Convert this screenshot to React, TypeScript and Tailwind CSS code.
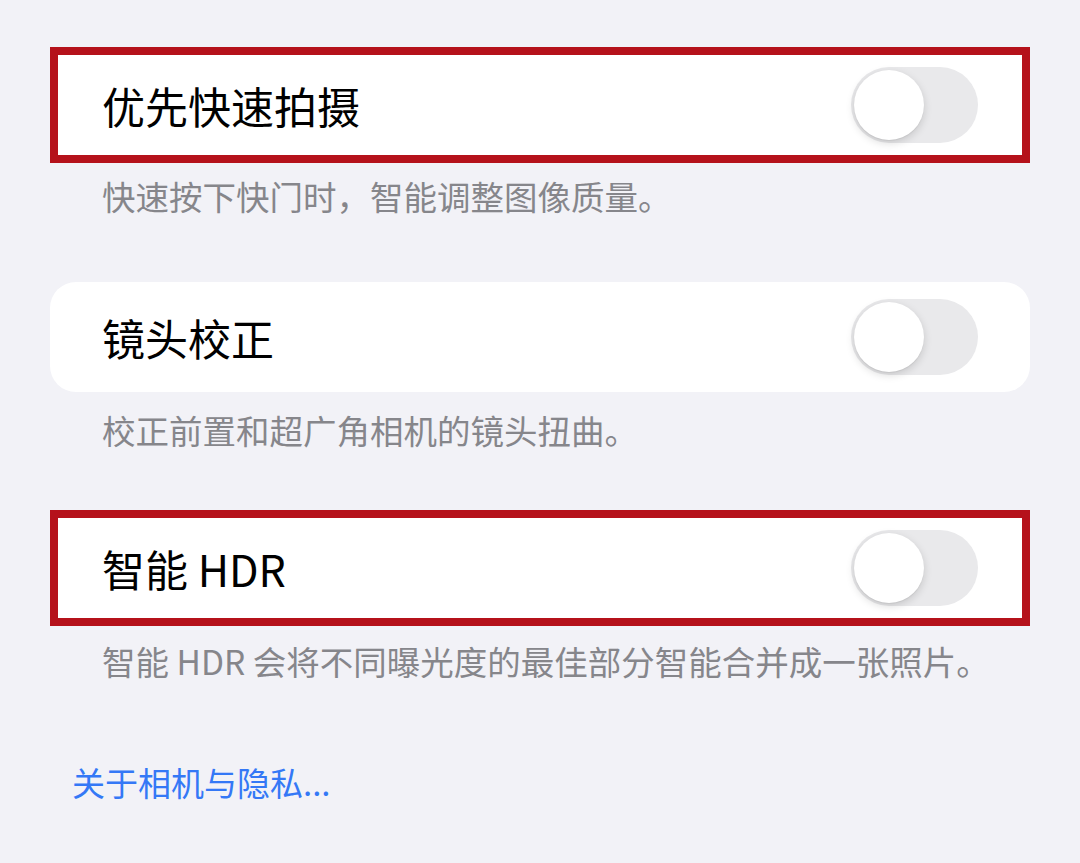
const font = { fontFamily: '"Noto Sans CJK SC", "Noto Sans", sans-serif' };

const Toggle = () => (
  <div className="w-[127px] h-[76px] rounded-full bg-[#e9e9eb] p-[3px] flex items-center">
    <div className="w-[70px] h-[70px] rounded-full bg-white shadow-[0_3px_8px_rgba(0,0,0,0.15),0_1px_1px_rgba(0,0,0,0.06)]" />
  </div>
);

const Row = ({ title, marked }: { title: string; marked?: boolean }) => (
  <div
    className={
      marked
        ? "h-[116px] bg-white border-[8px] border-[#b5121b] flex items-center justify-between pl-[44px] pr-[44px]"
        : "h-[110px] bg-white rounded-[26px] flex items-center justify-between pl-[52px] pr-[52px]"
    }
  >
    <span className="text-[43px] leading-none text-black">{title}</span>
    <Toggle />
  </div>
);

const Note = ({ text, className }: { text: string; className: string }) => (
  <div className={"h-[40px] flex items-center pl-[52px] text-[33.5px] text-[#86868b] " + className}>
    {text}
  </div>
);

export default function App() {
  return (
    <div className="w-[1080px] h-[863px] bg-[#f2f2f7] px-[50px] pt-[47px] overflow-hidden" style={font}>
      <Row title="优先快速拍摄" marked />
      <Note text="快速按下快门时，智能调整图像质量。" className="mt-[13px]" />

      <div className="mt-[66px]">
        <Row title="镜头校正" />
      </div>
      <Note text="校正前置和超广角相机的镜头扭曲。" className="mt-[18px]" />

      <div className="mt-[60px]">
        <Row title="智能 HDR" marked />
      </div>
      <Note text="智能 HDR 会将不同曝光度的最佳部分智能合并成一张照片。" className="mt-[15px]" />

      <div className="mt-[82px] h-[40px] flex items-center pl-[22px] text-[33px] text-[#3478f6]">
        关于相机与隐私...
      </div>
    </div>
  );
}
